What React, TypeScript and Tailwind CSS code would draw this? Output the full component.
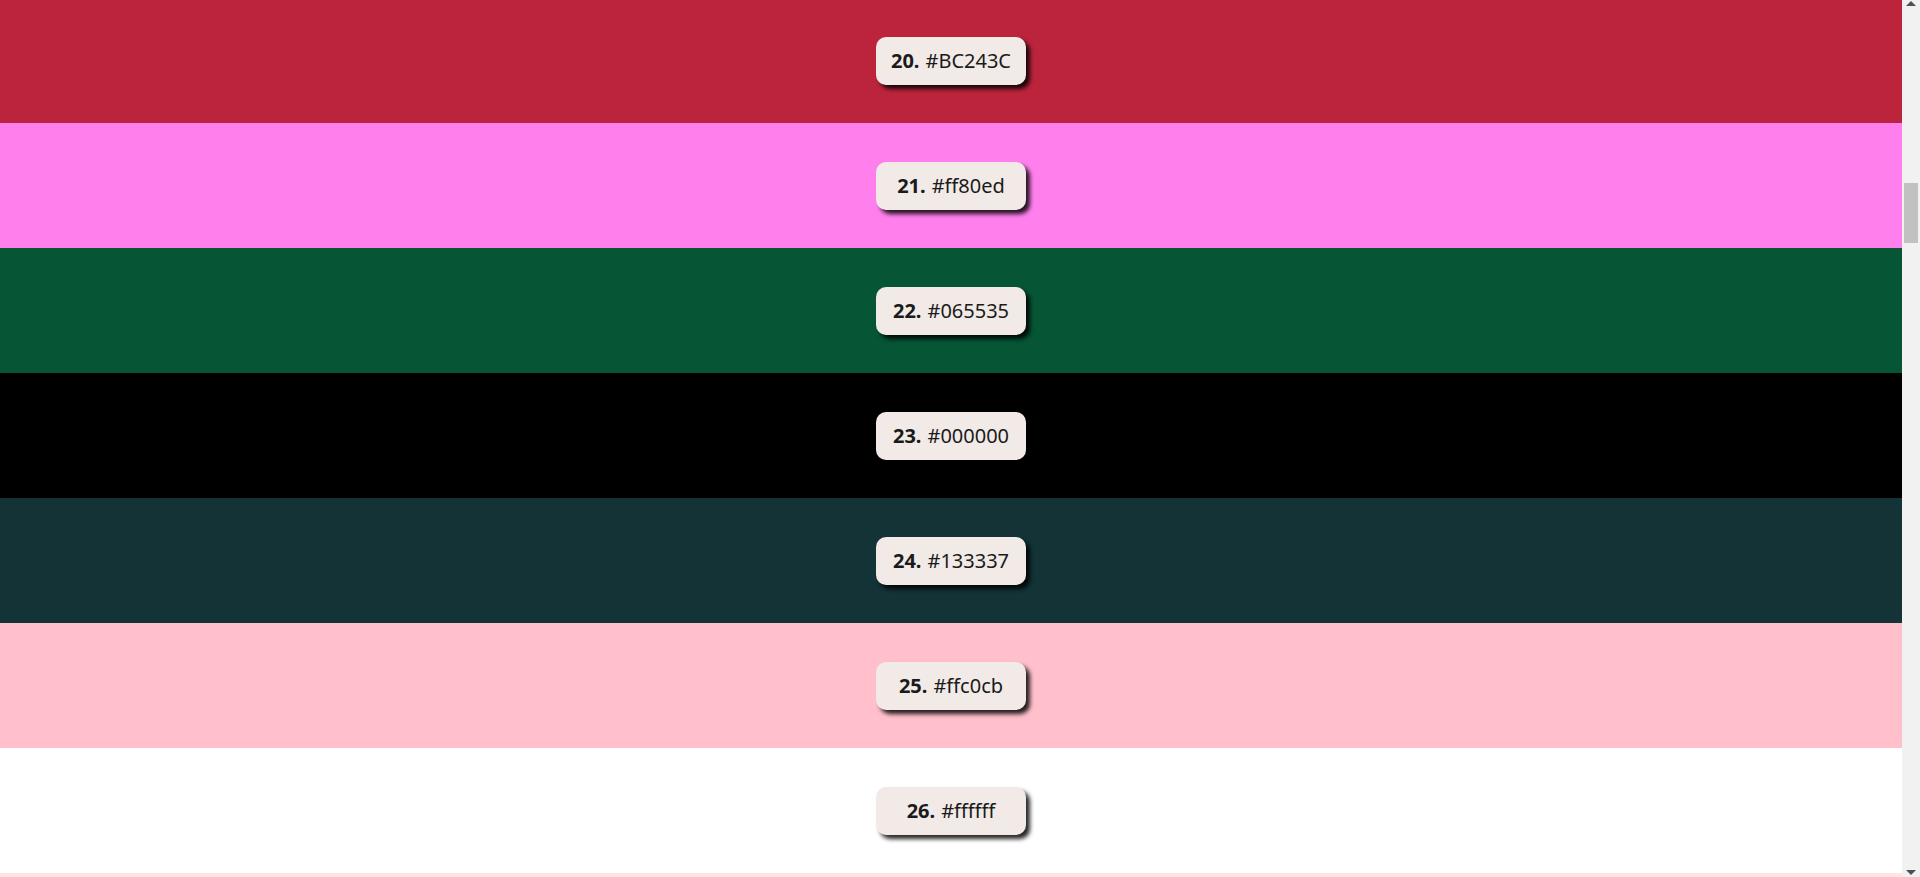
import React from "react";

const rows = [
  { n: 20, hex: "#BC243C", bg: "bg-[#BC243C]" },
  { n: 21, hex: "#ff80ed", bg: "bg-[#ff80ed]" },
  { n: 22, hex: "#065535", bg: "bg-[#065535]" },
  { n: 23, hex: "#000000", bg: "bg-[#000000]" },
  { n: 24, hex: "#133337", bg: "bg-[#133337]" },
  { n: 25, hex: "#ffc0cb", bg: "bg-[#ffc0cb]" },
  { n: 26, hex: "#ffffff", bg: "bg-[#ffffff]" },
];

export default function App() {
  return (
    <div className="flex h-[877px] w-[1920px] overflow-hidden" style={{ fontFamily: '"Noto Sans", sans-serif' }}>
      <div className="flex-1 flex flex-col -mt-[2px]">
        {rows.map((r) => (
          <div key={r.n} className={`${r.bg} h-[125px] shrink-0 flex items-center justify-center`}>
            <button className="w-[150px] h-[48px] rounded-[10px] bg-[#f1eae7] text-[#1a1a1a] text-[20px] shadow-[4px_4px_4px_rgba(0,0,0,0.85)] flex items-center justify-center gap-[6px]">
              <span className="font-bold">{r.n}.</span>
              <span>{r.hex}</span>
            </button>
          </div>
        ))}
        <div className="bg-[#ffe4e1] h-[125px] shrink-0" />
      </div>
      <div className="w-[18px] h-full bg-[#f1f1f1] relative shrink-0">
        <div className="absolute left-[4px] top-[1px] w-0 h-0 border-l-[5px] border-r-[5px] border-b-[5px] border-l-transparent border-r-transparent border-b-[#505050]" />
        <div className="absolute left-[2px] top-[183px] w-[14px] h-[60px] bg-[#c1c1c1]" />
        <div className="absolute left-[4px] bottom-[2px] w-0 h-0 border-l-[5px] border-r-[5px] border-t-[5px] border-l-transparent border-r-transparent border-t-[#505050]" />
      </div>
    </div>
  );
}
